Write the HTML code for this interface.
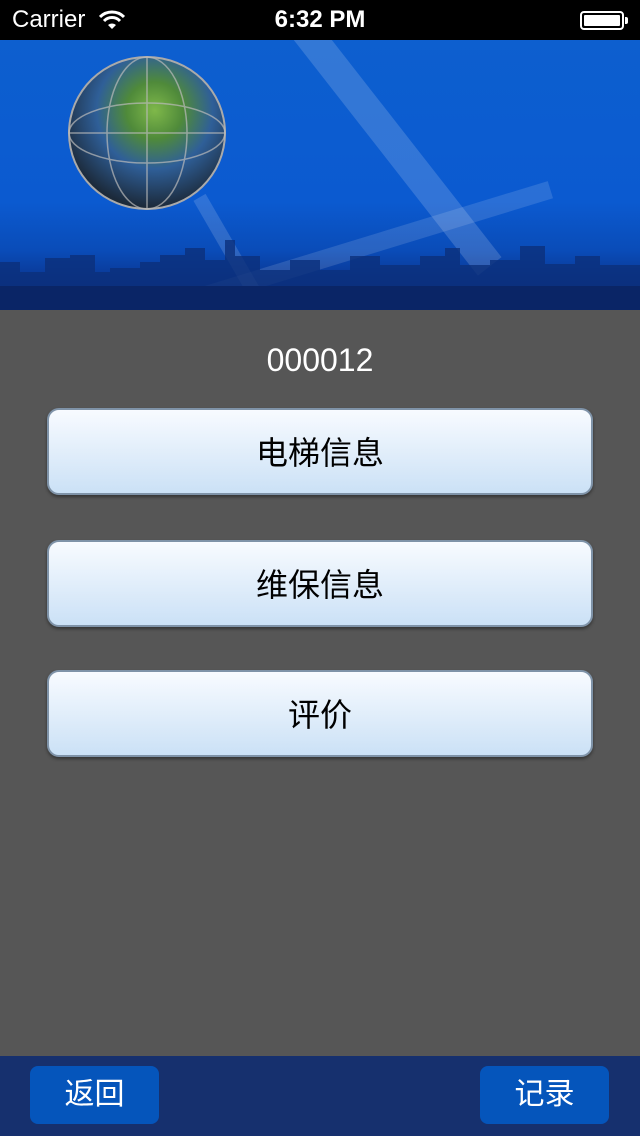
<!DOCTYPE html>
<html><head><meta charset="utf-8"><style>
*{margin:0;padding:0;box-sizing:border-box}
body{width:640px;height:1136px;background:#565656;position:relative;overflow:hidden;font-family:"Liberation Sans","Noto Sans CJK SC",sans-serif}
.sb{position:absolute;top:0;left:0;width:640px;height:40px;background:#000;color:#fff;font-size:24px}
.banner{position:absolute;top:40px;left:0;width:640px;height:270px;background:linear-gradient(180deg,#0d5fcf 0%,#0b5ad0 60%,#0a4cb8 78%,#0a3590 90%,#081f62 100%);overflow:hidden}
.num{position:absolute;top:342px;left:0;width:640px;text-align:center;color:#fff;font-size:32px}
.btn{position:absolute;left:47px;width:546px;height:87px;border:2px solid #7f93a8;border-radius:12px;background:linear-gradient(180deg,#f8fbff,#cbe1f6);box-shadow:0 2px 3px rgba(0,0,0,.4);text-align:center;line-height:86px;font-size:32px;color:#000}
.bar{position:absolute;top:1056px;left:0;width:640px;height:80px;background:#16306e}
.bb{position:absolute;top:10px;width:129px;height:58px;background:#0555bb;border-radius:8px;color:#fff;font-size:30px;text-align:center;line-height:58px}
</style></head><body>
<div class="sb">
<span style="position:absolute;left:12px;top:6px">Carrier</span>
<svg style="position:absolute;left:99px;top:10px" width="26" height="20" viewBox="0 0 26 20"><path d="M1 7 A17 17 0 0 1 25 7" stroke="#fff" stroke-width="3" fill="none"/><path d="M5 11 A11 11 0 0 1 21 11" stroke="#fff" stroke-width="3" fill="none"/><path d="M9 15 L13 19 L17 15 A6 6 0 0 0 9 15Z" fill="#fff"/></svg>
<span style="position:absolute;left:0;width:640px;text-align:center;top:6px;font-weight:bold">6:32 PM</span>
<div style="position:absolute;left:580px;top:11px;width:44px;height:19px;border:2px solid #fff;border-radius:4px;padding:2px"><div style="background:#fff;width:100%;height:100%;border-radius:1px"></div></div>
<div style="position:absolute;left:625px;top:17px;width:3px;height:7px;background:#fff;border-radius:0 2px 2px 0"></div>
</div>
<div class="banner">
<div style="position:absolute;left:290px;top:-10px;width:30px;height:300px;background:rgba(255,255,255,.16);transform:rotate(-38deg);transform-origin:top"></div>
<div style="position:absolute;left:220px;top:150px;width:14px;height:110px;background:rgba(255,255,255,.15);transform:rotate(-30deg)"></div>
<div style="position:absolute;left:120px;top:205px;width:440px;height:18px;background:rgba(255,255,255,.13);transform:rotate(-17deg)"></div>
<div style="position:absolute;left:68px;top:16px;width:158px;height:154px;border-radius:50%;background:radial-gradient(circle at 55% 35%,#7fb84a 0%,#4f8a3a 22%,#2f5f98 45%,#1c2a3a 75%,#222 100%);border:2px solid #aaa"></div>
<svg style="position:absolute;left:68px;top:16px" width="158" height="154"><g stroke="#bbb" stroke-width="1.5" fill="none" opacity=".7"><ellipse cx="79" cy="77" rx="40" ry="76"/><ellipse cx="79" cy="77" rx="78" ry="30"/><line x1="1" y1="77" x2="157" y2="77"/><line x1="79" y1="1" x2="79" y2="153"/></g></svg>
<svg style="position:absolute;left:0;top:190px" width="640" height="80"><path d="M0 80 L0 32 L20 32 L20 42 L45 42 L45 28 L70 28 L70 25 L95 25 L95 42 L110 42 L110 38 L140 38 L140 32 L160 32 L160 25 L185 25 L185 18 L205 18 L205 30 L225 30 L225 10 L235 10 L235 26 L260 26 L260 40 L290 40 L290 30 L320 30 L320 40 L350 40 L350 26 L380 26 L380 35 L420 35 L420 26 L445 26 L445 18 L460 18 L460 35 L490 35 L490 30 L520 30 L520 16 L545 16 L545 34 L575 34 L575 26 L600 26 L600 35 L640 35 L640 80Z" fill="#0b2f7a" opacity=".8"/><rect y="56" width="640" height="24" fill="#0a2566"/></svg>
</div>
<div class="num">000012</div>
<div class="btn" style="top:408px">电梯信息</div>
<div class="btn" style="top:540px">维保信息</div>
<div class="btn" style="top:670px">评价</div>
<div class="bar">
<div class="bb" style="left:30px">返回</div>
<div class="bb" style="left:480px">记录</div>
</div>
</body></html>
